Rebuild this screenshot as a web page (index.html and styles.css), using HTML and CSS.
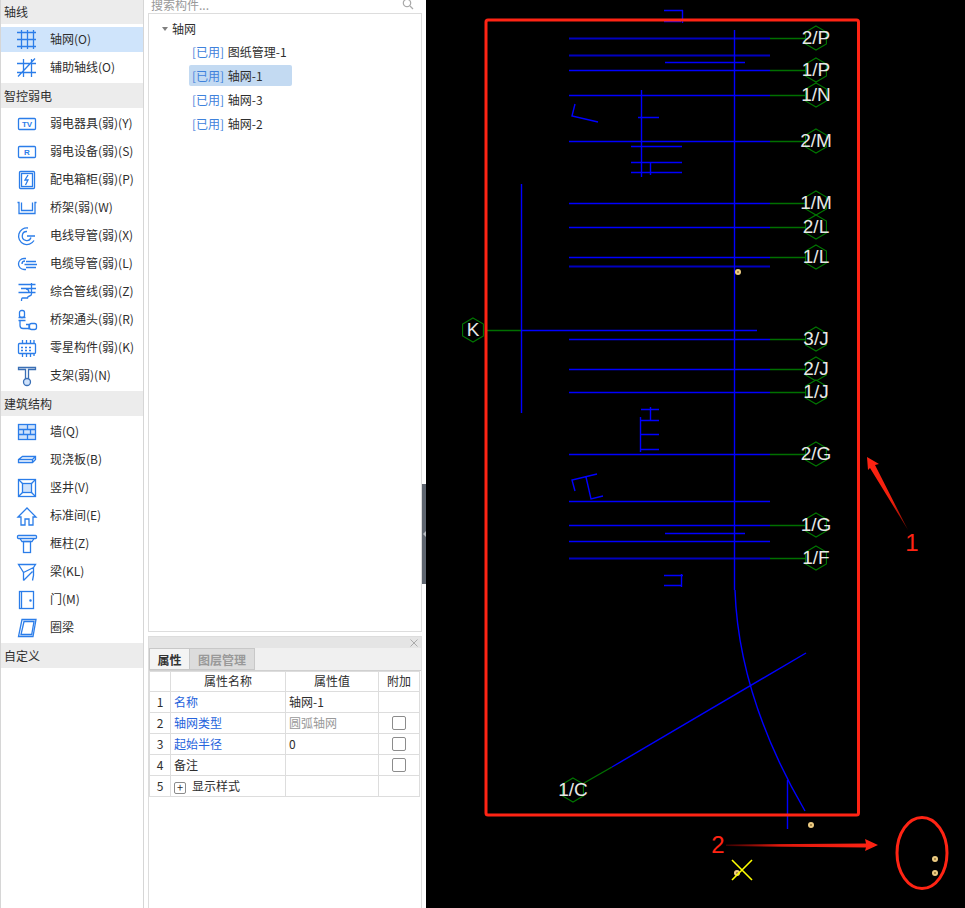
FILE: index.html
```html
<!DOCTYPE html>
<html lang="zh">
<head>
<meta charset="utf-8">
<title>轴网</title>
<link rel="stylesheet" href="styles.css">
</head>
<body>
<div class="app">
  <aside class="sidebar">
    <div class="group-title">轴线</div>
    <ul class="group">
      <li class="item active"><div class="item-in">
        <svg class="ic" viewBox="0 0 24 24"><path d="M6.500 2v19M12.500 2v19M18.500 2v19M2 4.500h19M2 11.500h19M2 18.500h19"/></svg><span>轴网(O)</span></div></li>
      <li class="item"><div class="item-in">
        <svg class="ic" viewBox="0 0 24 24"><path d="M8.500 3v18M16.500 3v18M2 7.500h19M2 16.500h19M3 20.500 20 2.500"/></svg><span>辅助轴线(O)</span></div></li>
    </ul>
    <div class="group-title">智控弱电</div>
    <ul class="group">
      <li class="item"><div class="item-in">
        <svg class="ic" viewBox="0 0 24 24"><rect x="3.500" y="6.500" width="17" height="11" rx="1"/><text class="ic-t" x="12" y="15">TV</text></svg><span>弱电器具(弱)(Y)</span></div></li>
      <li class="item"><div class="item-in">
        <svg class="ic" viewBox="0 0 24 24"><rect x="3.500" y="6.500" width="17" height="11" rx="1"/><text class="ic-t" x="12" y="15">R</text></svg><span>弱电设备(弱)(S)</span></div></li>
      <li class="item"><div class="item-in">
        <svg class="ic" viewBox="0 0 24 24"><rect x="4.500" y="3.500" width="15" height="17" rx="1"/><rect x="6.500" y="5.500" width="11" height="13"/><path d="M13 7l-3 5h3l-2.500 5"/></svg><span>配电箱柜(弱)(P)</span></div></li>
      <li class="item"><div class="item-in">
        <svg class="ic" viewBox="0 0 24 24"><path d="M2.500 6.500h1.500V17.500h16V6.500h1.500M6.500 6.500V14.500h11V6.500"/></svg><span>桥架(弱)(W)</span></div></li>
      <li class="item"><div class="item-in">
        <svg class="ic" viewBox="0 0 24 24"><path d="M19 16.500A8.300 8.300 0 1 1 13 4M16 13.500a4.500 4.500 0 1 1-4-6M12 12h8"/></svg><span>电线导管(弱)(X)</span></div></li>
      <li class="item"><div class="item-in">
        <svg class="ic" viewBox="0 0 24 24"><path d="M11 6.500H9a5.500 5.500 0 0 0 0 11h2M7 12a3 3 0 0 1 3-3M11 9.500h10M9.500 12.500H22M11 15.500h10"/></svg><span>电缆导管(弱)(L)</span></div></li>
      <li class="item"><div class="item-in">
        <svg class="ic" viewBox="0 0 24 24"><path d="M3.500 4.500h17M6 8.500h15M3.500 12.500h17M16.500 3v11c0 3-4 1-4 4h-5c-1 0-1 1-1 3M11 9c3 0 3 3 3 4"/></svg><span>综合管线(弱)(Z)</span></div></li>
      <li class="item"><div class="item-in">
        <svg class="ic" viewBox="0 0 24 24"><rect x="4.500" y="2.500" width="5" height="7" rx="2"/><path d="M3.500 9.500h7M3.500 12.500h7M5 12.500v5a3 3 0 0 0 3 3h6M11 16.500h3v5"/><rect x="14.500" y="15.500" width="7" height="6" rx="2"/></svg><span>桥架通头(弱)(R)</span></div></li>
      <li class="item"><div class="item-in">
        <svg class="ic" viewBox="0 0 24 24"><rect x="3.500" y="7.500" width="17" height="10" rx="1"/><path d="M7.500 4v3M11.500 4v3M15.500 4v3M7.500 18v3M11.500 18v3M15.500 18v3M19 18v2M19 4v3M6 11.500h2M10 11.500h2M14 11.500h2M6 14.500h2M10 14.500h2M14 14.500h2"/></svg><span>零星构件(弱)(K)</span></div></li>
      <li class="item"><div class="item-in">
        <svg class="ic ic-dark" viewBox="0 0 24 24"><path d="M3.500 3.500h17v2h-7V15h-3V5.500h-7z"/><circle class="f" cx="12" cy="18" r="3.500"/></svg><span>支架(弱)(N)</span></div></li>
    </ul>
    <div class="group-title">建筑结构</div>
    <ul class="group">
      <li class="item"><div class="item-in">
        <svg class="ic" viewBox="0 0 24 24"><rect class="f" x="3.500" y="4.500" width="17" height="15"/><path d="M3.500 9.500h17M3.500 14.500h17M12.500 4.500v5M8.500 9.500v5M15.500 9.500v5M12.500 14.500v5"/></svg><span>墙(Q)</span></div></li>
      <li class="item"><div class="item-in">
        <svg class="ic" viewBox="0 0 24 24"><path d="M3.500 11.500 7.500 8.500h13v3l-3 3h-14zM3.500 11.500h14v3M17.500 11.500l3-3"/></svg><span>现浇板(B)</span></div></li>
      <li class="item"><div class="item-in">
        <svg class="ic" viewBox="0 0 24 24"><rect x="3.500" y="3.500" width="17" height="17"/><rect class="f" x="7.500" y="7.500" width="9" height="9"/><path d="M3.500 3.500l4 4M20.500 3.500l-4 4M3.500 20.500l4-4M20.500 20.500l-4-4"/></svg><span>竖井(V)</span></div></li>
      <li class="item"><div class="item-in">
        <svg class="ic" viewBox="0 0 24 24"><path d="M3 13 12 4l9 9h-3v8h-4v-6h-4v6H6v-8z"/></svg><span>标准间(E)</span></div></li>
      <li class="item"><div class="item-in">
        <svg class="ic" viewBox="0 0 24 24"><rect x="2.500" y="3.500" width="19" height="3" rx="1"/><path d="M5 6.500l2 3h10l2-3"/><rect x="8.500" y="9.500" width="7" height="11"/></svg><span>框柱(Z)</span></div></li>
      <li class="item"><div class="item-in">
        <svg class="ic" viewBox="0 0 24 24"><path d="M3.500 4.500h17l-2 3-10 5zM8.500 12.500v8M18.500 7.500v8l-1 5M8.500 20.500l9-9"/></svg><span>梁(KL)</span></div></li>
      <li class="item"><div class="item-in">
        <svg class="ic" viewBox="0 0 24 24"><rect x="4.500" y="3.500" width="14" height="17"/><path d="M6.500 3.500v17"/><circle class="dot" cx="15.500" cy="12.500" r=".6"/></svg><span>门(M)</span></div></li>
      <li class="item"><div class="item-in">
        <svg class="ic" viewBox="0 0 24 24"><path d="M7 3.500h14l-3 17H3.500zM9 5.500h10l-2.300 13H6z"/></svg><span>圈梁</span></div></li>
    </ul>
    <div class="group-title">自定义</div>
  </aside>

  <section class="mid">
    <div class="search">
      <span class="search-text">搜索构件...</span>
      <svg class="search-icon" viewBox="0 0 12 12"><circle cx="5" cy="4" r="3.700"/><path d="M8 7l3 3"/></svg>
    </div>
    <div class="tree">
      <div class="tree-root"><span class="caret"></span>轴网</div>
      <ul class="tree-list">
        <li class="tree-item"><span class="used">[已用]</span> 图纸管理-1</li>
        <li class="tree-item selected"><span class="used">[已用]</span> 轴网-1</li>
        <li class="tree-item"><span class="used">[已用]</span> 轴网-3</li>
        <li class="tree-item"><span class="used">[已用]</span> 轴网-2</li>
      </ul>
    </div>
    <div class="props">
      <div class="props-title"><svg class="close" viewBox="0 0 8 8"><path d="M.5.500l7 7M7.500.500l-7 7"/></svg></div>
      <div class="tabs">
        <div class="tab on">属性</div>
        <div class="tab">图层管理</div>
      </div>
      <table class="grid">
        <colgroup><col class="c0"><col class="c1"><col class="c2"><col class="c3"></colgroup>
        <thead>
          <tr><th></th><th>属性名称</th><th>属性值</th><th>附加</th></tr>
        </thead>
        <tbody>
          <tr><td class="n">1</td><td class="link">名称</td><td>轴网-1</td><td></td></tr>
          <tr><td class="n">2</td><td class="link">轴网类型</td><td class="muted">圆弧轴网</td><td><div class="check"></div></td></tr>
          <tr><td class="n">3</td><td class="link">起始半径</td><td>0</td><td><div class="check"></div></td></tr>
          <tr><td class="n">4</td><td>备注</td><td></td><td><div class="check"></div></td></tr>
          <tr><td class="n">5</td><td><span class="plus">+</span>显示样式</td><td></td><td></td></tr>
        </tbody>
      </table>
    </div>
    <div class="splitter"><span class="split-arrow"></span></div>
  </section>

  <svg class="canvas" viewBox="426 0 539 908">
    <defs>
      <polygon id="hex" class="hex" points="0,-12 10.400,-6 10.400,6 0,12 -10.400,6 -10.400,-6"/>
      <g id="dot"><circle r="3" class="dot-o"/><circle r="1" class="dot-i"/></g>
      <linearGradient id="fade" x1="0" x2="1" y1="0" y2="0"><stop offset="0" stop-color="#3a0000"/><stop offset=".35" stop-color="#e0180c"/><stop offset="1" stop-color="#ff2414"/></linearGradient>
      <linearGradient id="fade1" x1="1" x2="0" y1="1" y2="0"><stop offset="0" stop-color="#700800"/><stop offset=".4" stop-color="#f0200c"/><stop offset="1" stop-color="#ff2414"/></linearGradient>
    </defs>

    <g class="blue">
      <path class="dim" d="M569 38.500H770M569 55.500H770M569 266.500H770M569 558.500H770"/>
      <path d="M569 70.500H770M569 95.500H770M569 141.500H770M569 203.500H770M569 227.500H770M569 257.500H770M569 339.500H770M569 369.500H770M569 392.500H770M569 454.500H770M569 501.500H770M569 525.500H770M569 541.500H770"/>
      <path d="M665 62.500H745M665 533.500H745M521 330.500H757"/>
      <path d="M734.500 30V590"/>
      <path d="M735 590C737 650 755 725 805 811"/>
      <path d="M806 653 612 767"/>
      <path d="M787.500 780V829M521.500 184V413"/>
      <path d="M664 10.500H683M682.500 10V23M664 21.500H681"/>
      <path d="M575 104 572 116 598 122"/>
      <path d="M641.500 90V177M638 117.500H659M631 146.500H682M631 162.500H682M631 172.500H682M650.500 162V175"/>
      <path d="M640.500 417V452M641 409.500H659M641 420.500H659M641 434.500H659M641 449.500H659M650.500 407V420"/>
      <path d="M575 491 572 480 597 474M586 477 591 499 603 496"/>
      <path d="M664 575.500H683M664 585.500H682M681.500 574V587"/>
    </g>

    <g class="green">
      <path d="M770 38.500H806M770 70.500H806M770 95.500H806M770 141.500H806M770 203.500H806M770 227.500H806M770 257.500H806M770 339.500H806M770 369.500H806M770 392.500H806M770 454.500H806M770 525.500H806M770 558.500H806M486 330.500H521M612 767 584 783"/>
    </g>

    <use href="#hex" x="816" y="38"/><use href="#hex" x="816" y="70"/><use href="#hex" x="816" y="95"/>
    <use href="#hex" x="816" y="141"/><use href="#hex" x="816" y="203"/><use href="#hex" x="816" y="227"/>
    <use href="#hex" x="816" y="257"/><use href="#hex" x="816" y="339"/><use href="#hex" x="816" y="369"/>
    <use href="#hex" x="816" y="392"/><use href="#hex" x="816" y="454"/><use href="#hex" x="816" y="525"/>
    <use href="#hex" x="816" y="558"/><use href="#hex" x="473" y="330"/><use href="#hex" x="573" y="790"/>

    <g class="lbl">
      <text x="816" y="44">2/P</text><text x="816" y="76">1/P</text><text x="816" y="101">1/N</text>
      <text x="816" y="147">2/M</text><text x="816" y="209">1/M</text><text x="816" y="233">2/L</text>
      <text x="816" y="263">1/L</text><text x="816" y="345">3/J</text><text x="816" y="375">2/J</text>
      <text x="816" y="398">1/J</text><text x="816" y="460">2/G</text><text x="816" y="531">1/G</text>
      <text x="816" y="564">1/F</text><text x="473" y="336">K</text><text x="573" y="796">1/C</text>
    </g>

    <use href="#dot" x="738" y="272"/><use href="#dot" x="811" y="825"/>
    <use href="#dot" x="935" y="859"/><use href="#dot" x="935" y="873"/><use href="#dot" x="737" y="873"/>
    <path class="yellow" d="M732 860 752 880M752 860 732 880"/>

    <rect class="mark" x="486" y="20" width="372.500" height="795" rx="2"/>
    <ellipse class="mark" cx="922" cy="853" rx="25" ry="35.500"/>
    <polygon points="726,844.500 866,843.500 865,839 878,845 865,851 866,847.500 726,846" fill="url(#fade)"/>
    <polygon points="867,457 879,464 875,465 908,530 870,468 868,470" fill="url(#fade1)"/>
    <text class="mark-t" x="718" y="853">2</text>
    <text class="mark-t" x="912" y="551">1</text>
  </svg>
</div>
</body>
</html>
```

FILE: styles.css
```css
* { box-sizing: border-box; }
html, body { margin: 0; padding: 0; background: #fff; }
body {
  width: 965px;
  height: 908px;
  overflow: hidden;
  font: 12px/1.2 "Noto Sans CJK SC", "Noto Sans", sans-serif;
  color: #2e2e2e;
}
ul { list-style: none; margin: 0; padding: 0; }

.app { display: flex; height: 908px; overflow: hidden; }

/* left category list */
.sidebar {
  width: 144px;
  flex: none;
  margin-top: -1px;
  border-left: 1px solid #d6d6d6;
  border-right: 1px solid #d6d6d6;
}
.group-title {
  height: 25px;
  padding-left: 3px;
  background: #ececec;
  line-height: 25px;
}
.group { padding: 1px 0 2px; }
.item { height: 28px; padding: 2px 0 1px; }
.item-in {
  display: flex;
  align-items: center;
  height: 25px;
  padding-left: 14px;
  gap: 11px;
}
.item.active .item-in { background: #cfe4fb; }
.ic {
  width: 24px;
  height: 24px;
  flex: none;
  fill: none;
  stroke: #2b7de9;
  stroke-width: 1.3;
}
.ic .f { fill: #cfe2fb; }
.ic .dot { fill: #2b7de9; }
.ic-dark { stroke: #3a6fb5; }
.ic-t {
  font: 700 8px "Liberation Sans", sans-serif;
  text-anchor: middle;
  fill: #2b7de9;
  stroke: none;
}

/* middle column */
.mid {
  position: relative;
  width: 282px;
  flex: none;
  display: flex;
  flex-direction: column;
  padding: 0 4px;
}
.search {
  display: flex;
  justify-content: space-between;
  height: 14px;
  padding: 0 8px 0 3px;
  overflow: hidden;
  border-bottom: 1px solid #ddd;
  line-height: 10px;
  color: #999;
}
.search-icon {
  width: 12px;
  height: 12px;
  margin-top: -1px;
  fill: none;
  stroke: #aaa;
  stroke-width: 1.2;
}
.tree {
  flex: 1;
  border: 1px solid #ddd;
  border-top: 0;
  padding: 3px 0 0 13px;
}
.tree-root { display: flex; align-items: center; height: 24px; }
.caret {
  width: 0;
  height: 0;
  margin-right: 4px;
  border: 3px solid transparent;
  border-top: 4px solid #808080;
  border-bottom: 0;
}
.tree-list { padding-left: 27px; }
.tree-item {
  width: 103px;
  height: 21px;
  margin-bottom: 3px;
  padding-left: 3px;
  border-radius: 2px;
  line-height: 21px;
  white-space: nowrap;
}
.tree-item.selected { background: #c3daf2; }
.used { color: #3f82dc; margin-right: 1px; }

/* properties */
.props {
  height: 272px;
  margin-top: 4px;
  flex: none;
  border: 1px solid #ddd;
  border-bottom: 0;
}
.props-title {
  display: flex;
  justify-content: flex-end;
  align-items: center;
  height: 11px;
  padding-right: 3px;
  background: #e5e5e5;
}
.close { width: 8px; height: 8px; fill: none; stroke: #aaa; stroke-width: 1; }
.tabs {
  display: flex;
  height: 23px;
  background: #f0f0f0;
  border-bottom: 1px solid #d0d0d0;
}
.tab {
  padding: 0 8px;
  line-height: 21px;
  font-weight: 700;
  color: #999;
  background: #dcdcdc;
  border: 1px solid #c8c8c8;
  border-left: 0;
}
.tab.on {
  width: 41px;
  padding: 0;
  text-align: center;
  color: #333;
  background: #f4f4f4;
  border-left: 1px solid #c8c8c8;
}
.grid {
  width: 270px;
  table-layout: fixed;
  border-collapse: collapse;
}
.c0 { width: 21px; }
.c1 { width: 115px; }
.c2 { width: 93px; }
.c3 { width: 41px; }
.grid th, .grid td {
  height: 21px;
  padding: 0 3px;
  border: 1px solid #ddd;
  font-weight: 400;
  white-space: nowrap;
}
.grid th { height: 20px; padding: 0; text-align: center; }
.grid .n { text-align: center; padding: 0; }
.link { color: #2563dc; }
.muted { color: #999; }
.check {
  width: 14px;
  height: 14px;
  margin: 0 auto;
  border: 1px solid #8c8c8c;
  border-radius: 2px;
}
.plus {
  display: inline-block;
  width: 12px;
  height: 12px;
  margin-right: 6px;
  border: 1px solid #8c8c8c;
  border-radius: 2px;
  line-height: 9px;
  text-align: center;
  font-size: 11px;
  vertical-align: -1px;
}

/* drag handle lying over the column edge */
.splitter {
  position: absolute;
  top: 484px;
  right: 0;
  display: flex;
  align-items: center;
  justify-content: flex-end;
  width: 4px;
  height: 100px;
  background: #5f6670;
}
.split-arrow {
  width: 0;
  height: 0;
  border: 3px solid transparent;
  border-right: 3px solid #b8bcc2;
  border-left: 0;
}

/* CAD canvas */
.canvas { display: block; width: 539px; height: 908px; flex: none; background: #000; }
.blue { fill: none; stroke: #0000ff; stroke-width: 1.4; }
.blue .dim { stroke: #0000c0; stroke-width: 1.8; }
.green { fill: none; stroke: #007000; stroke-width: 1.4; }
.hex { fill: #000; stroke: #007800; stroke-width: 1.1; }
.lbl text {
  font: 19px "Liberation Sans", sans-serif;
  text-anchor: middle;
  fill: #e8e8e8;
}
.dot-o { fill: #eccb82; }
.dot-i { fill: #94743a; }
.yellow { fill: none; stroke: #ffff00; stroke-width: 1.6; }
.mark { fill: none; stroke: #ff2414; stroke-width: 3; }
.mark-t {
  font: 24px "Liberation Sans", sans-serif;
  text-anchor: middle;
  fill: #ff2414;
}
```
